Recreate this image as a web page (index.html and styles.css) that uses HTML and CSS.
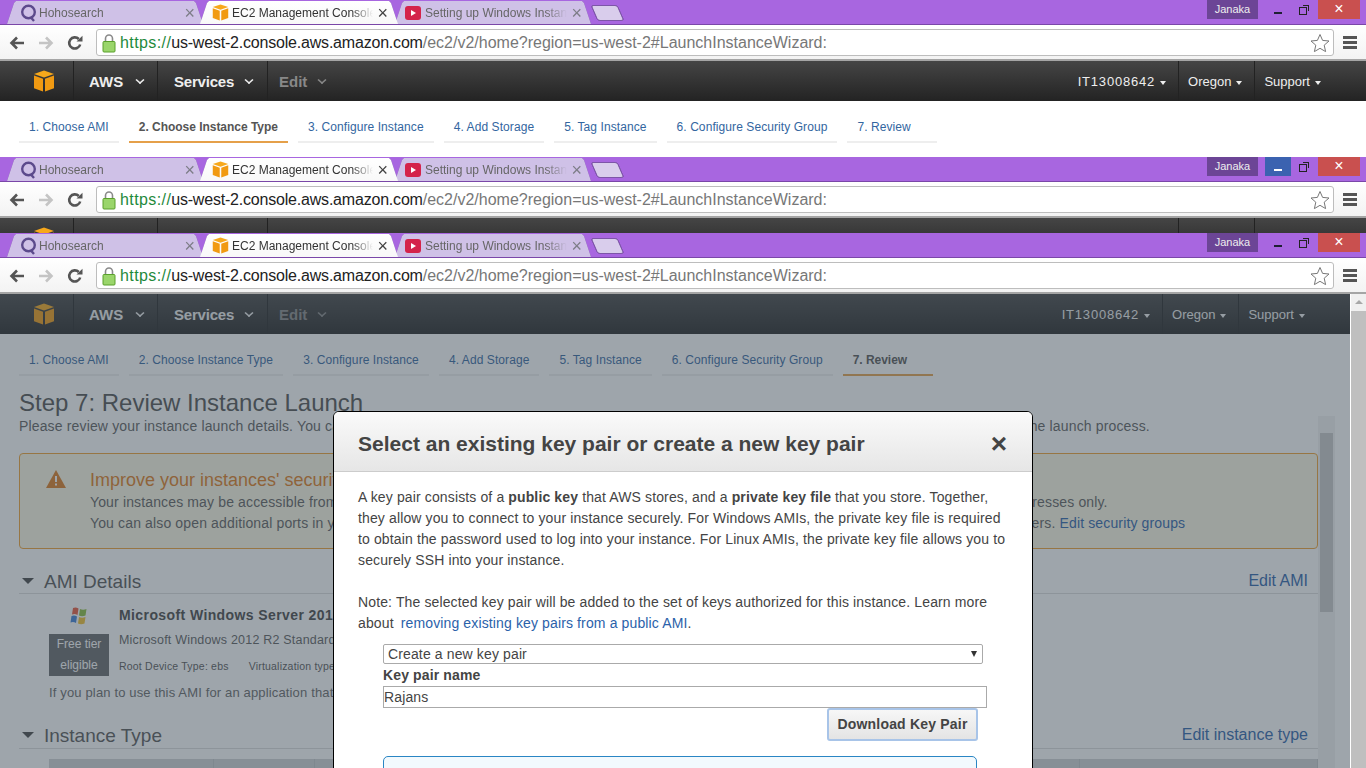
FILE: index.html
```html
<!DOCTYPE html>
<html lang="en">
<head>
    <meta charset="UTF-8">
    <title>EC2 Management Console</title>
    <link rel="stylesheet" href="styles.css">
</head>
<body>
    <!-- Icons used by all three browser windows -->
    <svg class="icon-defs" width="0" height="0">
        <symbol id="i-cube" viewBox="0 0 22 22">
            <path d="M11 0.5 21 4 11 7.5 1 4Z" fill="#f7a81b"/>
            <path d="M1 5.5 10 8.7V21.5L1 18.2Z" fill="#f19a12"/>
            <path d="M21 5.5 12 8.7V21.5L21 18.2Z" fill="#f19a12"/>
        </symbol>
        <symbol id="i-q" viewBox="0 0 18 18">
            <circle cx="8.5" cy="8" r="6.3" fill="none" stroke="#5c4a8c" stroke-width="2.4"/>
            <path d="M10.5 13 14 17" fill="none" stroke="#5c4a8c" stroke-width="2.4"/>
        </symbol>
        <symbol id="i-yt" viewBox="0 0 16 14">
            <rect width="16" height="14" rx="3" fill="#d4234a"/>
            <path d="M6 4 11 7 6 10Z" fill="#fff"/>
        </symbol>
        <symbol id="i-back" viewBox="0 0 16 14">
            <path d="M15 7H3M8 1.5 2.5 7 8 12.5" fill="none" stroke="currentColor" stroke-width="2.6"/>
        </symbol>
        <symbol id="i-forward" viewBox="0 0 16 14">
            <path d="M1 7H13M8 1.5 13.5 7 8 12.5" fill="none" stroke="currentColor" stroke-width="2.6"/>
        </symbol>
        <symbol id="i-reload" viewBox="0 0 16 16">
            <path d="M13.2 9.5A5.6 5.6 0 1 1 11.8 4" fill="none" stroke="#555" stroke-width="2.6"/>
            <path d="M9.5 6.6H15.5V0.8Z" fill="#555"/>
        </symbol>
        <symbol id="i-lock" viewBox="0 0 14 20">
            <path d="M3.5 9V5.5a3.5 3.5 0 0 1 7 0V9" fill="none" stroke="#8a8a8a" stroke-width="1.6"/>
            <rect x="1" y="8.5" width="12" height="10.5" rx="1" fill="#9ad56b" stroke="#5aa02c"/>
        </symbol>
        <symbol id="i-star" viewBox="0 0 20 20">
            <path d="M10 1.5 12.6 7.4 19 8 14.2 12.2 15.6 18.6 10 15.3 4.4 18.6 5.8 12.2 1 8 7.4 7.4Z" fill="#fff" stroke="#777" stroke-width="1"/>
        </symbol>
        <symbol id="i-newtab" viewBox="0 0 34 18">
            <path d="M2 1.5H24Q26 1.5 27 3.5L32 15Q32.5 16.5 30 16.5H9Q7 16.5 6 14.5L1 3Q0.8 1.5 2 1.5Z" fill="#d9cdec" stroke="#7d55a8"/>
        </symbol>
    </svg>

    <!-- First window: wizard at step 2 -->
    <section class="window window-top">
        <div class="titlebar">
            <div class="tabs">
                <div class="tab"><svg class="favicon"><use href="#i-q"/></svg><span class="tab-title">Hohosearch</span><span class="tab-close">×</span></div>
                <div class="tab tab-active"><svg class="favicon"><use href="#i-cube"/></svg><span class="tab-title">EC2 Management Console</span><span class="tab-close">×</span></div>
                <div class="tab tab-yt"><svg class="favicon favicon-yt"><use href="#i-yt"/></svg><span class="tab-title">Setting up Windows Instance</span><span class="tab-close">×</span></div>
                <svg class="newtab"><use href="#i-newtab"/></svg>
            </div>
            <div class="frame-controls">
                <span class="profile">Janaka</span>
                <span class="frame-btn">
                    <i class="glyph-min"></i>
                </span>
                <span class="frame-btn"><i class="glyph-restore"></i></span>
                <span class="frame-close">×</span>
            </div>
        </div>
        <div class="toolbar">
            <svg class="tool-icon"><use href="#i-back"/></svg>
            <svg class="tool-icon tool-off"><use href="#i-forward"/></svg>
            <svg class="tool-icon tool-reload"><use href="#i-reload"/></svg>
            <div class="omnibox">
                <svg class="lock"><use href="#i-lock"/></svg>
                <span class="url"><span class="url-scheme">https://</span><span class="url-host">us-west-2.console.aws.amazon.com</span>/ec2/v2/home?region=us-west-2#LaunchInstanceWizard:</span>
                <svg class="star"><use href="#i-star"/></svg>
            </div>
            <div class="menu-btn"><i></i><i></i><i></i></div>
        </div>
        <nav class="awsnav">
            <svg class="aws-logo"><use href="#i-cube"/></svg>
            <a class="nav-item nav-main">AWS<i class="caret"></i></a>
            <a class="nav-item nav-services">Services<i class="caret"></i></a>
            <a class="nav-item nav-edit">Edit<i class="caret"></i></a>
            <div class="nav-right">
                <a class="nav-sub nav-account">IT13008642<i class="caret caret-small"></i></a>
                <a class="nav-sub">Oregon<i class="caret caret-small"></i></a>
                <a class="nav-sub">Support<i class="caret caret-small"></i></a>
            </div>
        </nav>
        <ul class="wizard">
            <li>1. Choose AMI</li>
            <li class="current">2. Choose Instance Type</li>
            <li>3. Configure Instance</li>
            <li>4. Add Storage</li>
            <li>5. Tag Instance</li>
            <li>6. Configure Security Group</li>
            <li>7. Review</li>
        </ul>
    </section>

    <!-- Second window: only the chrome and a strip of the nav show -->
    <section class="window window-middle">
        <div class="titlebar">
            <div class="tabs">
                <div class="tab"><svg class="favicon"><use href="#i-q"/></svg><span class="tab-title">Hohosearch</span><span class="tab-close">×</span></div>
                <div class="tab tab-active"><svg class="favicon"><use href="#i-cube"/></svg><span class="tab-title">EC2 Management Console</span><span class="tab-close">×</span></div>
                <div class="tab tab-yt"><svg class="favicon favicon-yt"><use href="#i-yt"/></svg><span class="tab-title">Setting up Windows Instance</span><span class="tab-close">×</span></div>
                <svg class="newtab"><use href="#i-newtab"/></svg>
            </div>
            <div class="frame-controls">
                <span class="profile">Janaka</span>
                <span class="frame-btn frame-btn-hover"><i class="glyph-min"></i></span>
                <span class="frame-btn"><i class="glyph-restore"></i></span>
                <span class="frame-close">×</span>
            </div>
        </div>
        <div class="toolbar">
            <svg class="tool-icon"><use href="#i-back"/></svg>
            <svg class="tool-icon tool-off"><use href="#i-forward"/></svg>
            <svg class="tool-icon tool-reload"><use href="#i-reload"/></svg>
            <div class="omnibox">
                <svg class="lock"><use href="#i-lock"/></svg>
                <span class="url"><span class="url-scheme">https://</span><span class="url-host">us-west-2.console.aws.amazon.com</span>/ec2/v2/home?region=us-west-2#LaunchInstanceWizard:</span>
                <svg class="star"><use href="#i-star"/></svg>
            </div>
            <div class="menu-btn"><i></i><i></i><i></i></div>
        </div>
        <nav class="awsnav">
            <svg class="aws-logo"><use href="#i-cube"/></svg>
            <a class="nav-item nav-main">AWS<i class="caret"></i></a>
            <a class="nav-item nav-services">Services<i class="caret"></i></a>
            <a class="nav-item nav-edit">Edit<i class="caret"></i></a>
            <div class="nav-right">
                <a class="nav-sub nav-account">IT13008642<i class="caret caret-small"></i></a>
                <a class="nav-sub">Oregon<i class="caret caret-small"></i></a>
                <a class="nav-sub">Support<i class="caret caret-small"></i></a>
            </div>
        </nav>
    </section>

    <!-- Third window: review step with the key pair dialog open -->
    <section class="window window-bottom">
        <div class="titlebar">
            <div class="tabs">
                <div class="tab"><svg class="favicon"><use href="#i-q"/></svg><span class="tab-title">Hohosearch</span><span class="tab-close">×</span></div>
                <div class="tab tab-active"><svg class="favicon"><use href="#i-cube"/></svg><span class="tab-title">EC2 Management Console</span><span class="tab-close">×</span></div>
                <div class="tab tab-yt"><svg class="favicon favicon-yt"><use href="#i-yt"/></svg><span class="tab-title">Setting up Windows Instance</span><span class="tab-close">×</span></div>
                <svg class="newtab"><use href="#i-newtab"/></svg>
            </div>
            <div class="frame-controls">
                <span class="profile">Janaka</span>
                <span class="frame-btn"><i class="glyph-min"></i></span>
                <span class="frame-btn"><i class="glyph-restore"></i></span>
                <span class="frame-close">×</span>
            </div>
        </div>
        <div class="toolbar">
            <svg class="tool-icon"><use href="#i-back"/></svg>
            <svg class="tool-icon tool-off"><use href="#i-forward"/></svg>
            <svg class="tool-icon tool-reload"><use href="#i-reload"/></svg>
            <div class="omnibox">
                <svg class="lock"><use href="#i-lock"/></svg>
                <span class="url"><span class="url-scheme">https://</span><span class="url-host">us-west-2.console.aws.amazon.com</span>/ec2/v2/home?region=us-west-2#LaunchInstanceWizard:</span>
                <svg class="star"><use href="#i-star"/></svg>
            </div>
            <div class="menu-btn"><i></i><i></i><i></i></div>
        </div>

        <div class="page">
            <div class="viewport">
                <nav class="awsnav">
                    <svg class="aws-logo"><use href="#i-cube"/></svg>
                    <a class="nav-item nav-main">AWS<i class="caret"></i></a>
                    <a class="nav-item nav-services">Services<i class="caret"></i></a>
                    <a class="nav-item nav-edit">Edit<i class="caret"></i></a>
                    <div class="nav-right">
                        <a class="nav-sub nav-account">IT13008642<i class="caret caret-small"></i></a>
                        <a class="nav-sub">Oregon<i class="caret caret-small"></i></a>
                        <a class="nav-sub">Support<i class="caret caret-small"></i></a>
                    </div>
                </nav>
                <ul class="wizard">
                    <li>1. Choose AMI</li>
                    <li>2. Choose Instance Type</li>
                    <li>3. Configure Instance</li>
                    <li>4. Add Storage</li>
                    <li>5. Tag Instance</li>
                    <li>6. Configure Security Group</li>
                    <li class="current">7. Review</li>
                </ul>

                <h1 class="step-title">Step 7: Review Instance Launch</h1>
                <div class="review">
                    <div class="review-panel">
                        <p class="step-intro">Please review your instance launch details. You can go back to edit changes for each section. Click Launch to assign a key pair to your instance and complete the launch process.</p>

                        <div class="warning">
                            <svg class="warning-icon" viewBox="0 0 20 18"><path d="M10 0 20 18H0Z" fill="#dc7a1e"/><path d="M9 6H11V12H9ZM9 13.5H11V15.5H9Z" fill="#fff"/></svg>
                            <div class="warning-body">
                                <h2>Improve your instances' security. Your security group, launch-wizard, is open to the world.</h2>
                                <p>Your instances may be accessible from any IP address. We recommend that you update your security group rules to allow access from known IP addresses only.</p>
                                <p>You can also open additional ports in your security group to facilitate access to the application or service you're running, e.g., HTTP (80) for web servers. <a>Edit security groups</a></p>
                            </div>
                        </div>

                        <div class="section-head">
                            <i class="section-arrow"></i>
                            <h3>AMI Details</h3>
                            <a>Edit AMI</a>
                        </div>
                        <div class="ami">
                            <div class="ami-side">
                                <svg class="win-flag" viewBox="0 0 20 18">
                                    <path d="M4 1 Q7 0 9.5 1.5L8.5 8Q6 6.5 3 7.5Z" fill="#e8563a"/>
                                    <path d="M11 2Q14 3.5 17.5 2L16.5 8.5Q13 10 10 8.5Z" fill="#8bbf3c"/>
                                    <path d="M2.5 9Q5.5 8 8 9.5L7 16Q4.5 14.5 1.5 15.5Z" fill="#3d7fd6"/>
                                    <path d="M10 10Q13 11.5 16.5 10L15.5 16.5Q12 18 9 16.5Z" fill="#f2c12e"/>
                                </svg>
                                <div class="free-tier">Free tier<br>eligible</div>
                            </div>
                            <div class="ami-info">
                                <strong>Microsoft Windows Server 2012 R2 Base</strong>
                                <span class="ami-desc">Microsoft Windows 2012 R2 Standard</span>
                                <span class="ami-meta">Root Device Type: ebs<em>Virtualization type: hvm</em></span>
                            </div>
                        </div>
                        <p class="ami-note">If you plan to use this AMI for an application that benefits from Microsoft License Mobility, fill out the form.</p>

                        <div class="section-head section-type">
                            <i class="section-arrow"></i>
                            <h3>Instance Type</h3>
                            <a>Edit instance type</a>
                        </div>
                        <div class="type-table"><span></span><span></span><span></span><span></span></div>
                    </div>
                    <div class="inner-scroll"><i class="inner-thumb"></i></div>
                </div>

                <div class="dim"></div>

                <div class="modal">
                    <div class="modal-head">
                        <h2>Select an existing key pair or create a new key pair</h2>
                        <span class="modal-close">×</span>
                    </div>
                    <div class="modal-body">
                        <p>A key pair consists of a <b>public key</b> that AWS stores, and a <b>private key file</b> that you store. Together, they allow you to connect to your instance securely. For Windows AMIs, the private key file is required to obtain the password used to log into your instance. For Linux AMIs, the private key file allows you to securely SSH into your instance.</p>
                        <p class="modal-note">Note: The selected key pair will be added to the set of keys authorized for this instance. Learn more about <a>removing existing key pairs from a public AMI</a>.</p>
                        <div class="key-form">
                            <div class="select-box">
                                <select><option>Create a new key pair</option></select>
                            </div>
                            <label for="keyname">Key pair name</label>
                            <input id="keyname" type="text" value="Rajans">
                            <div class="download-row"><button>Download Key Pair</button></div>
                            <div class="info-box"></div>
                        </div>
                    </div>
                </div>
            </div>
            <div class="outer-scroll"><i class="outer-arrow"></i><i class="outer-thumb"></i></div>
        </div>
    </section>
</body>
</html>
```

FILE: styles.css
```css
/* Page is three browser windows stacked on top of each other */
html, body {
    margin: 0;
    height: 768px;
    overflow: hidden;
}
body {
    font-family: "Liberation Sans", Arial, sans-serif;
    color: #444;
    background: #fff;
}
.icon-defs {
    display: block;
    height: 0;
}
.window {
    overflow: hidden;
}
.window-top {
    height: 157px;
}
.window-middle {
    height: 76px;
}
.window-bottom {
    height: 535px;
    display: flex;
    flex-direction: column;
}

/* Title bar and tabs */
.titlebar {
    height: 24px;
    background-color: #a866e0;
    border-bottom: 1px solid #7a47a8;
    display: flex;
    justify-content: space-between;
}
.tabs {
    display: flex;
    align-items: flex-end;
    padding-left: 5px;
    filter: drop-shadow(0 0 0.6px #6d4597);
}
.tab {
    width: 200px;
    height: 23px;
    margin-right: -7px;
    padding: 0 10px 0 15px;
    box-sizing: border-box;
    background-color: #cfc1e7;
    display: flex;
    align-items: center;
    clip-path: polygon(0 100%, 2px 100%, 9px 2px, 11px 0, calc(100% - 11px) 0, calc(100% - 9px) 2px, calc(100% - 2px) 100%, 100% 100%);
}
.tab-active {
    width: 202px;
    padding-left: 14px;
    padding-right: 12px;
    background: linear-gradient(#fff, #f8f8f8);
    position: relative;
    z-index: 1;
}
.tab-yt {
    padding-left: 12px;
    padding-right: 11px;
}
.favicon {
    width: 18px;
    height: 18px;
    flex: none;
    margin-right: 1px;
}
.tab-active .favicon {
    width: 17px;
    height: 17px;
    margin-right: 3px;
}
.favicon-yt {
    width: 16px;
    height: 14px;
    margin-right: 4px;
}
.tab-title {
    flex: 1;
    font-size: 12px;
    color: #666;
    white-space: nowrap;
    overflow: hidden;
    -webkit-mask-image: linear-gradient(to right, #000 85%, transparent);
    mask-image: linear-gradient(to right, #000 85%, transparent);
}
.tab-active .tab-title {
    color: #333;
}
.tab-close {
    font-size: 18px;
    line-height: 18px;
    color: #7d7d87;
    margin-left: 4px;
}
.tab-active .tab-close {
    color: #444;
}
.newtab {
    width: 34px;
    height: 18px;
    margin-left: 5px;
    margin-bottom: 2px;
}
.frame-controls {
    display: flex;
    height: 19px;
    padding-right: 6px;
    align-items: stretch;
}
.profile {
    width: 51px;
    background-color: #6c4596;
    color: #eee;
    font-size: 11px;
    line-height: 18px;
    text-align: center;
    margin-right: 7px;
}
.frame-btn {
    width: 26px;
    position: relative;
    display: flex;
    align-items: center;
    justify-content: center;
}
.frame-btn-hover {
    background-color: #3b62b0;
}
.glyph-min {
    width: 8px;
    height: 2px;
    margin-top: 6px;
    background-color: #1f1f33;
}
.frame-btn-hover .glyph-min {
    background-color: #fff;
}
.glyph-restore {
    width: 6px;
    height: 6px;
    margin: 3px 3px 0 0;
    border: 1px solid #222;
    box-shadow: 2px -2px 0 -1px #a866e0, 3px -3px 0 -1px #222;
}
.frame-close {
    width: 42px;
    margin-left: 1px;
    background-color: #c9504f;
    color: #fff;
    font-size: 16px;
    line-height: 18px;
    text-align: center;
}

/* Address bar */
.toolbar {
    height: 36px;
    box-sizing: border-box;
    background: linear-gradient(#fff, #f3f3f3);
    border-bottom: 2px solid #a5a5a5;
    display: flex;
    align-items: center;
    padding: 1px 0 0 9px;
}
.tool-icon {
    width: 16px;
    height: 14px;
    color: #555;
    margin-right: 13px;
}
.tool-off {
    color: #c4c4c4;
    margin-right: 13px;
}
.tool-reload {
    height: 16px;
    margin-right: 13px;
}
.omnibox {
    width: 1238px;
    height: 27px;
    box-sizing: border-box;
    background-color: #fff;
    border: 1px solid #bdbdbd;
    border-radius: 3px;
    display: flex;
    align-items: center;
    padding-left: 5px;
}
.lock {
    width: 14px;
    height: 20px;
    flex: none;
}
.url {
    flex: 1;
    margin-left: 4px;
    font-size: 16px;
    letter-spacing: 0;
    color: #777;
    white-space: nowrap;
}
.url-scheme {
    color: #1f8a3c;
    letter-spacing: 0.4px;
}
.url-host {
    color: #222;
    letter-spacing: -0.2px;
}
.star {
    width: 20px;
    height: 20px;
    margin-right: 3px;
}
.menu-btn {
    margin-left: 9px;
    width: 14px;
    display: flex;
    flex-direction: column;
    gap: 2px;
}
.menu-btn i {
    height: 3px;
    background-color: #555;
}

/* AWS navigation */
.awsnav {
    height: 40px;
    flex: none;
    background: linear-gradient(#454545, #232323);
    display: flex;
    align-items: center;
    color: #eee;
}
.aws-logo {
    width: 22px;
    height: 22px;
    flex: none;
    margin-left: 33px;
    margin-right: 18px;
}
.nav-item {
    font-size: 15px;
    font-weight: bold;
    height: 40px;
    box-sizing: border-box;
    padding-top: 1px;
    border-left: 1px solid #222;
    display: flex;
    align-items: center;
}
.nav-main {
    width: 84px;
    padding-left: 15px;
}
.nav-services {
    width: 110px;
    padding-left: 16px;
    letter-spacing: -0.2px;
}
.nav-services .caret {
    margin-left: 11px;
}
.nav-edit {
    padding-left: 11px;
    color: #888;
}
.nav-edit .caret {
    margin-left: 11px;
}
.caret {
    width: 6px;
    height: 6px;
    margin: -3px 0 0 13px;
    border: solid currentColor;
    border-width: 0 2px 2px 0;
    transform: scale(0.8, 0.7) rotate(45deg);
}
.caret-small {
    width: 0;
    height: 0;
    margin: 2px 0 0 5px;
    border-width: 4px 3.5px 0;
    border-color: currentColor transparent transparent;
    transform: none;
}
.nav-right {
    margin-left: auto;
    display: flex;
    padding-right: 37px;
}
.viewport .nav-right {
    padding-right: 37px;
}
.nav-sub {
    font-size: 13px;
    padding: 1px 8px 0 9px;
    height: 40px;
    box-sizing: border-box;
    display: flex;
    align-items: center;
}
.nav-sub + .nav-sub {
    border-left: 1px solid #222;
    margin-left: 4px;
}
.nav-account {
    letter-spacing: 0.8px;
}

/* Wizard steps */
.wizard {
    list-style: none;
    margin: 0;
    height: 56px;
    flex: none;
    box-sizing: border-box;
    padding: 0 0 0 19px;
    display: flex;
    align-items: flex-start;
    gap: 10px;
    background-color: #fff;
}
.wizard li {
    font-size: 12px;
    letter-spacing: 0.08px;
    line-height: 16px;
    height: 22px;
    margin-top: 18px;
    padding: 0 10px;
    color: #33669f;
    border-bottom: 2px solid #eee;
    white-space: nowrap;
}
.wizard li:last-child {
    width: 70px;
}
.wizard li.current {
    color: #555;
    font-weight: bold;
    letter-spacing: -0.03px;
    border-bottom-color: #e5a04a;
}

/* Browser page in the bottom window */
.page {
    flex: 1;
    min-height: 0;
    display: flex;
}
.viewport {
    flex: 1;
    min-width: 0;
    position: relative;
    overflow: hidden;
    background-color: #fff;
}
.outer-scroll {
    width: 15px;
    flex: none;
    border-left: 1px solid #fff;
    background-color: #f0f0f0;
    display: flex;
    flex-direction: column;
    align-items: stretch;
}
.outer-arrow {
    width: 0;
    height: 0;
    margin: 6px auto 7px;
    border: 4px solid transparent;
    border-top: 0;
    border-bottom: 4px solid #a8a8a8;
}
.outer-thumb {
    flex: 1;
    background-color: #bfbfbf;
}
.step-title {
    margin: 0;
    padding-left: 19px;
    font-size: 24px;
    font-weight: normal;
    line-height: 26px;
    color: #4e4e4e;
}
.review {
    display: flex;
    padding-left: 19px;
}
.review-panel {
    width: 1299px;
    flex: none;
}
.step-intro {
    margin: 2px 0 0;
    font-size: 14px;
    letter-spacing: 0.15px;
    line-height: 16px;
    color: #5c5c5c;
    white-space: nowrap;
}
.inner-scroll {
    width: 13px;
    height: 400px;
    padding: 17px 2px 0;
    background-color: #f2f2f2;
}
.inner-thumb {
    display: block;
    height: 179px;
    background-color: #c8c8c8;
}
.warning {
    margin-top: 19px;
    height: 96px;
    box-sizing: border-box;
    border: 1px solid #f0a030;
    border-radius: 4px;
    background-color: #fdf9e4;
    display: flex;
    padding: 16px 0 0 26px;
}
.warning-icon {
    width: 20px;
    height: 18px;
    flex: none;
    margin-right: 24px;
}
.warning-body {
    min-width: 0;
    white-space: nowrap;
}
.warning-body h2 {
    margin: 0 0 2px;
    font-size: 18px;
    font-weight: normal;
    line-height: 20px;
    color: #e07b1a;
}
.warning-body p {
    margin: 0;
    font-size: 14px;
    letter-spacing: 0.14px;
    line-height: 21px;
    color: #5c5c5c;
}
.warning-body a,
.section-head a {
    color: #2b62aa;
}
.section-head {
    margin-top: 23px;
    height: 21px;
    border-bottom: 1px solid #ddd;
    display: flex;
    align-items: flex-start;
    padding-left: 3px;
}
.section-arrow {
    width: 0;
    height: 0;
    margin: 6px 10px 0 0;
    border: 6px solid transparent;
    border-top: 6px solid #444;
    border-bottom: 0;
}
.section-head h3 {
    margin: 0;
    font-size: 19px;
    font-weight: normal;
    line-height: 20px;
    color: #555;
}
.section-head a {
    margin-left: auto;
    margin-right: 10px;
    font-size: 16px;
    line-height: 18px;
}
.ami {
    display: flex;
    margin-left: 30px;
    margin-top: 13px;
}
.ami-side {
    width: 60px;
    margin-right: 10px;
    flex: none;
}
.win-flag {
    display: block;
    width: 20px;
    height: 18px;
    margin: 0 auto 9px;
}
.free-tier {
    background-color: #656668;
    color: #fff;
    font-size: 12px;
    line-height: 21px;
    text-align: center;
    height: 42px;
}
.ami-info {
    display: flex;
    flex-direction: column;
    padding-top: 0;
}
.ami-info strong {
    font-size: 14px;
    letter-spacing: 0.4px;
    line-height: 16px;
    color: #444;
    white-space: nowrap;
}
.ami-desc {
    margin-top: 9px;
    font-size: 12.5px;
    letter-spacing: 0.2px;
    line-height: 16px;
    color: #5c5c5c;
    white-space: nowrap;
}
.ami-meta {
    margin-top: 10px;
    font-size: 10.5px;
    letter-spacing: 0.2px;
    line-height: 16px;
    color: #555;
    white-space: nowrap;
}
.ami-meta em {
    font-style: normal;
    margin-left: 20px;
}
.ami-note {
    margin: 9px 0 0 30px;
    font-size: 13px;
    letter-spacing: 0.15px;
    line-height: 16px;
    color: #666;
    white-space: nowrap;
}
.section-type {
    margin-top: 25px;
    height: 22px;
}
.type-table {
    margin: 10px 0 0 30px;
    height: 40px;
    background-color: #d0d3d5;
    display: grid;
    grid-template-columns: 165px 101px 765px 1fr;
}
.type-table span {
    border-right: 1px solid #c0c4c7;
}

/* Dialog over the dimmed page */
.dim {
    position: absolute;
    top: 0;
    right: 0;
    bottom: 0;
    left: 0;
    background-color: rgba(61, 75, 87, 0.5);
}
.modal {
    position: absolute;
    top: 117px;
    left: 333px;
    width: 700px;
    height: 420px;
    box-sizing: border-box;
    background-color: #fff;
    border: 1px solid #000;
    border-radius: 6px;
    overflow: hidden;
}
.modal-head {
    height: 60px;
    box-sizing: border-box;
    padding: 4px 25px 0 24px;
    background: linear-gradient(#fafafa, #e6e6e6);
    border-bottom: 1px solid #ccc;
    display: flex;
    align-items: center;
    justify-content: space-between;
}
.modal-head h2 {
    margin: 0;
    font-size: 21px;
    line-height: 24px;
    color: #444;
}
.modal-close {
    font-size: 28px;
    font-weight: bold;
    line-height: 24px;
    color: #444;
}
.modal-body {
    padding: 15px 24px 0;
    font-size: 14px;
    letter-spacing: 0.13px;
    line-height: 21px;
    color: #444;
}
.modal-body p {
    margin: 0;
}
.modal-body .modal-note {
    margin-top: 21px;
}
.modal-body a {
    color: #2b62aa;
    margin-left: 3px;
}
.key-form {
    margin: 10px 0 0 25px;
}
.select-box {
    width: 600px;
    height: 20px;
    position: relative;
}
.select-box select {
    width: 100%;
    height: 100%;
    box-sizing: border-box;
    padding: 0 0 0 4px;
    border: 1px solid #aaa;
    border-radius: 2px;
    background-color: #fff;
    font: 14px "Liberation Sans", Arial, sans-serif;
    letter-spacing: 0.13px;
    color: #444;
    appearance: none;
}
.select-box::after {
    content: "";
    position: absolute;
    top: 7px;
    right: 6px;
    border: 3px solid transparent;
    border-top: 6px solid #333;
    border-bottom: 0;
}
.key-form label {
    display: block;
    font-weight: bold;
    line-height: 22px;
}
.key-form input {
    display: block;
    width: 604px;
    height: 22px;
    box-sizing: border-box;
    padding: 0;
    border: 1px solid #aaa;
    font: 14px "Liberation Sans", Arial, sans-serif;
    letter-spacing: 0.13px;
    color: #444;
}
.download-row {
    width: 595px;
    display: flex;
    justify-content: flex-end;
}
.download-row button {
    width: 151px;
    height: 33px;
    padding: 0 0 2px;
    border: 2px solid #a8c4e8;
    border-radius: 3px;
    background: linear-gradient(#f7f7f7, #e4e4e4);
    font: bold 14px "Liberation Sans", Arial, sans-serif;
    letter-spacing: 0.2px;
    color: #444;
}
.info-box {
    width: 594px;
    height: 60px;
    box-sizing: border-box;
    margin-top: 15px;
    border: 1px solid #2a86c4;
    border-radius: 5px;
    background-color: #f2f9fd;
}
```
